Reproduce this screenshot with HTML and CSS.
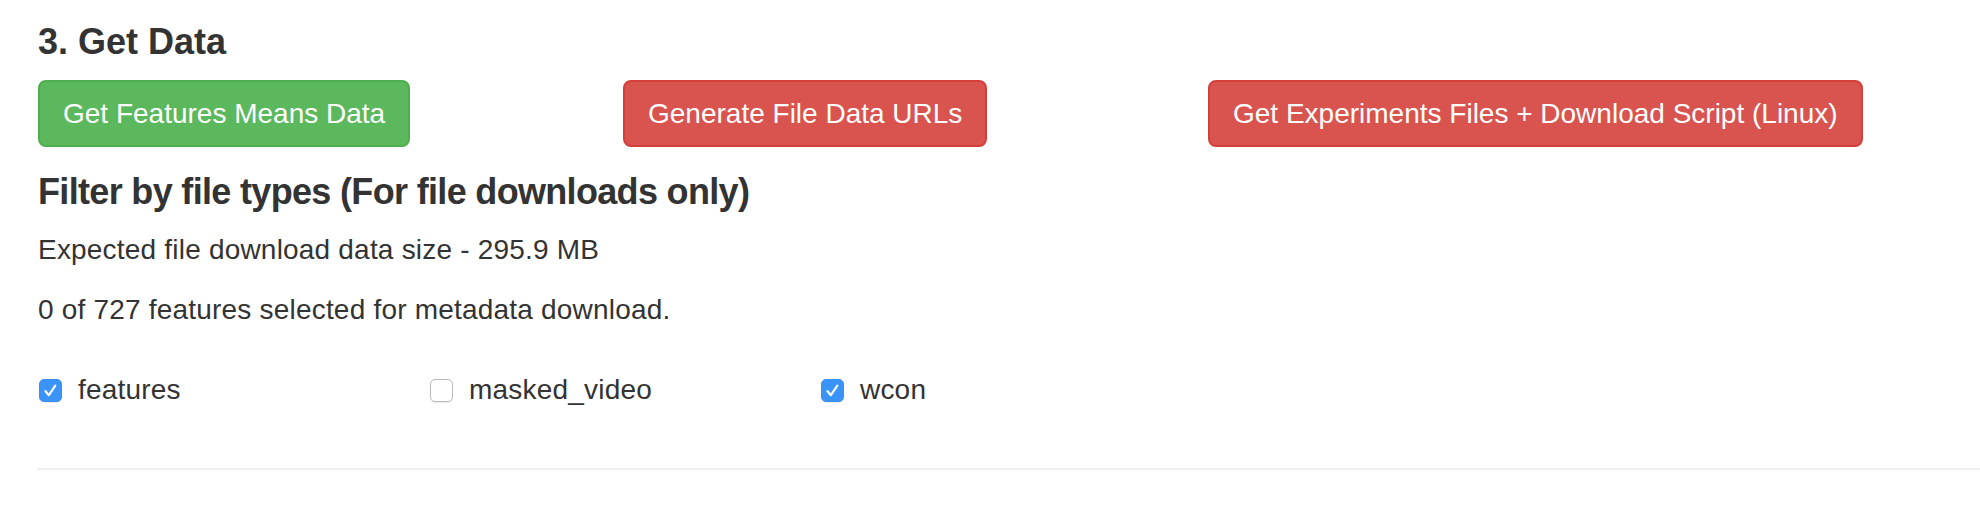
FILE: index.html
```html
<!DOCTYPE html>
<html>
<head>
<meta charset="utf-8">
<link rel="stylesheet" href="styles.css">
</head>
<body>
<div class="page">
  <h3 class="section-title">3. Get Data</h3>
  <div class="btn-row">
    <div class="btn-col"><button class="btn btn-success">Get Features Means Data</button></div>
    <div class="btn-col"><button class="btn btn-danger">Generate File Data URLs</button></div>
    <div class="btn-col"><button class="btn btn-danger">Get Experiments Files + Download Script (Linux)</button></div>
  </div>
  <h4 class="sub-title">Filter by file types (For file downloads only)</h4>
  <p class="info">Expected file download data size - 295.9 MB</p>
  <p class="info">0 of 727 features selected for metadata download.</p>
  <div class="check-row">
    <label class="check">
      <span class="box checked"><svg viewBox="0 0 23 23" width="23" height="23"><path d="M6.5 12.2 L9.9 16.2 L16.3 6.6" fill="none" stroke="#fff" stroke-width="2.2" stroke-linecap="round" stroke-linejoin="round"/></svg></span>
      <span class="label-text">features</span>
    </label>
    <label class="check">
      <span class="box"></span>
      <span class="label-text">masked_video</span>
    </label>
    <label class="check">
      <span class="box checked"><svg viewBox="0 0 23 23" width="23" height="23"><path d="M6.5 12.2 L9.9 16.2 L16.3 6.6" fill="none" stroke="#fff" stroke-width="2.2" stroke-linecap="round" stroke-linejoin="round"/></svg></span>
      <span class="label-text">wcon</span>
    </label>
  </div>
  <hr class="divider">
</div>
</body>
</html>
```

FILE: styles.css
```css
html, body {
  margin: 0;
  padding: 0;
  background: #ffffff;
}

body {
  font-family: "Liberation Sans", Arial, Helvetica, sans-serif;
  color: #333333;
  font-size: 28px;
  line-height: 40px;
}

.page {
  padding-left: 38px;
  overflow: hidden;
}

.section-title {
  font-size: 36px;
  font-weight: 700;
  line-height: 40px;
  margin: 22px 0 18px 0;
  color: #333333;
}

.btn-row {
  display: grid;
  grid-template-columns: repeat(3, 585px);
}

.btn-col {
  display: flex;
}

.btn {
  font-family: "Liberation Sans", Arial, Helvetica, sans-serif;
  font-size: 28px;
  line-height: 39px;
  padding: 12px 23px;
  border-radius: 8px;
  border: 2px solid transparent;
  color: #ffffff;
  white-space: nowrap;
  cursor: pointer;
}

.btn-success {
  background: #5cb85c;
  border-color: #4cae4c;
}

.btn-danger {
  background: #d9534f;
  border-color: #d43f3a;
}

.sub-title {
  font-size: 36px;
  font-weight: 700;
  line-height: 40px;
  margin: 25px 0 18px 0;
  letter-spacing: -0.67px;
  color: #333333;
}

.info {
  margin: 0 0 20px 0;
  letter-spacing: 0.2px;
}

.check-row {
  display: grid;
  grid-template-columns: repeat(3, 391px);
  margin-top: 40px;
}

.check {
  display: flex;
  align-items: center;
  gap: 16px;
  padding-left: 1px;
}

.box {
  width: 23px;
  height: 23px;
  box-sizing: border-box;
  border-radius: 5px;
  border: 1px solid #b9b9b9;
  background: #ffffff;
  box-shadow: 0 1px 1px rgba(0, 0, 0, 0.08);
  display: flex;
}

.box.checked {
  background: #3a93f7;
  border-color: #3a8ff0;
}

.box svg {
  display: block;
  margin: -1px;
}

.label-text {
  line-height: 40px;
  letter-spacing: 0.2px;
}

.divider {
  margin: 58px 0 0 0;
  border: 0;
  border-top: 2px solid #eeeeee;
  height: 0;
}
```
